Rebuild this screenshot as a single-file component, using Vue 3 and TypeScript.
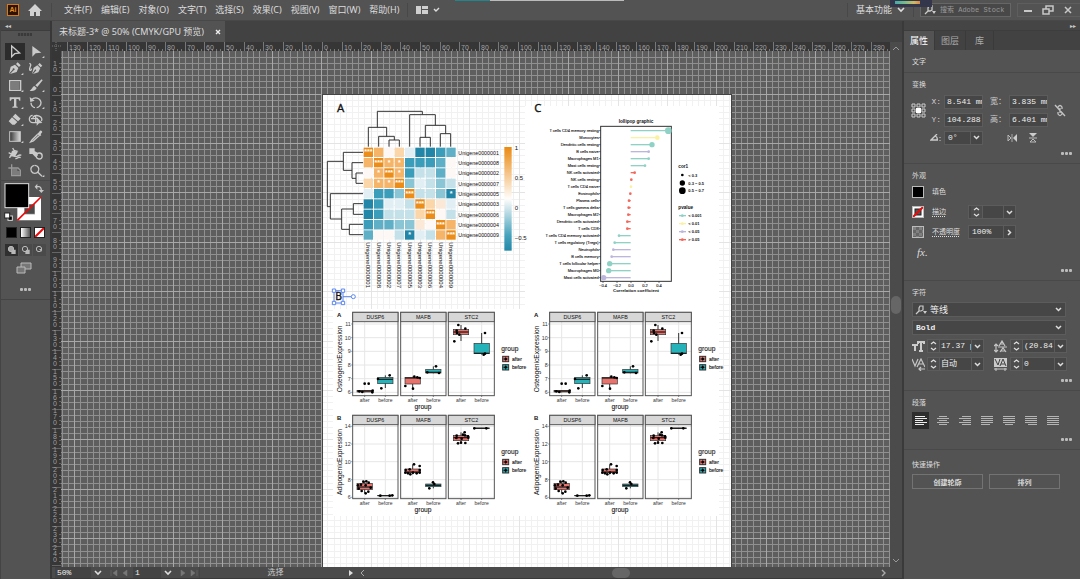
<script setup lang="ts">
interface Icon { name: string; fill?: string; line?: string; corner?: boolean }
interface Row { name: string; x: number; r: number; tone: string }
interface Box { at: number; q1: number; q3: number; med: number; lo: number; hi: number; tone: string; dots: number[][] }
interface Plot { tag: string; title: string; x: number; y: number; strip: number; ticks: { label: string; y: number }[]; panels: { gene: string; x: number; w: number; boxes: Box[] }[] }

const menus = ['文件(F)', '编辑(E)', '对象(O)', '文字(T)', '选择(S)', '效果(C)', '视图(V)', '窗口(W)', '帮助(H)']

const tools: Icon[] = [
  { name: '选择工具', line: 'M20 9V41L29 32L44 30Z' },
  { name: '直接选择工具', fill: 'M19 9V41L29 31L46 29Z', corner: true },
  { name: '钢笔工具', fill: 'M12 41L17 20L30 14L40 24L35 36L15 42L26 31A3 3 0 1 0 23 29ZM33 12L38 7L47 16L42 21Z', corner: true },
  { name: '曲率工具', fill: 'M18 42L23 23L34 16L43 25L37 37L21 42L31 31L28 28ZM36 14L41 9L49 17L44 22Z', line: 'M10 10C20 13 9 22 11 29C13 34 17 30 16 26' },
  { name: '矩形工具', line: 'M14 11H47V40H14Z', fill: 'M17 14H44V37H17Z', corner: true },
  { name: '画笔工具', fill: 'M47 7L50 10L34 30L28 25ZM25 27L32 33C29 41 20 43 11 41C18 38 19 29 25 27Z', corner: true },
  { name: '文字工具', fill: 'M14 10H46V20H43C42 16 41 15 34 15V36C34 38 36 38 38 38V41H22V38C24 38 27 38 27 36V15C20 15 19 16 18 20H14Z', corner: true },
  { name: '旋转工具', line: 'M17 17C25 8 43 11 45 26C45 34 38 41 32 41M15 26C15 34 21 41 27 41', fill: 'M11 9L13 24L26 20Z', corner: true },
  { name: '橡皮擦工具', fill: 'M31 8L47 23L39 31L23 17ZM21 19L37 33L29 41H22L11 31Z', corner: true },
  { name: '形状生成器工具', line: 'M20 13A9 10 0 0 0 20 35H33M20 20A12 9 0 1 1 46 30M15 23H36M29 14V35', fill: 'M32 18V44L39 37L49 36Z' },
  { name: '渐变工具', corner: true },
  { name: '吸管工具', fill: 'M37 15L42 8Q47 6 49 12L44 19L46 22L41 25L34 18L36 14Z', line: 'M35 19L18 36L14 42L22 39L39 23' },
  { name: '操控变形工具', line: 'M11 23L22 29L36 19L27 16L23 9M14 39C15 28 26 30 29 33C36 40 40 26 49 31M31 41C40 42 38 33 47 38', fill: 'M21 17L30 18L38 22L29 36L16 33Z' },
  { name: '混合工具', fill: 'M10 10H26V27H10ZM24 17L35 23V33L28 36L20 28Z', line: 'M40 24A9 9 0 1 1 39 42A9 9 0 0 1 40 24' },
  { name: '画板工具', line: 'M20 7V18M10 18H39L46 25V41H20V18', fill: 'M22 20H37V27H44V39H22Z' },
  { name: '缩放工具', line: 'M27 10A12 12 0 1 1 26 10M35 30L48 43', corner: true }
]

const shade = {
  o: '#eb8d18', p: '#f5b468', q: '#fad6a8', r: '#fbe8d6', w: '#fdf8f5',
  a: '#e1eff4', b: '#c4e0e9', c: '#8ac5d6', d: '#5fafc6', e: '#3b9dba', f: '#2186a8'
} as Record<string, string>
const matrix = ['opwqaffed', 'poppeeedw', 'wpopebbdw', 'qppocabcb', 'aeecobbcf', 'feaaboqra', 'febbbqowb', 'eddccrwop', 'dwwbfabpo']
const genes = ['Unigene0000001', 'Unigene0000008', 'Unigene0000002', 'Unigene0000007', 'Unigene0000005', 'Unigene0000003', 'Unigene0000006', 'Unigene0000004', 'Unigene0000009']
const cells = matrix.flatMap((line, j) => [...line].map((c, i) => ({
  x: 131 + i * 31, y: 161 + j * 31, tone: shade[c],
  mark: i === j ? '***' : (i + j === 12 && (i === 8 || j === 8)) || (i > 0 && j > 0 && i < 4 && j < 4) ? '*' : ''
})))

const green = '#8fd1c4'
const yellow = '#faf2a2'
const purple = '#bcb6dc'
const red = '#f3685c'
const lollipops: Row[] = [
  { name: 'T cells CD4 memory resting', x: 430, r: 10, tone: green },
  { name: 'Monocytes', x: 397, r: 7, tone: yellow },
  { name: 'Dendritic cells resting', x: 381, r: 8, tone: green },
  { name: 'B cells naive', x: 371, r: 4, tone: purple },
  { name: 'Macrophages M1', x: 371, r: 4, tone: green },
  { name: 'Mast cells resting', x: 360, r: 4, tone: green },
  { name: 'NK cells activated', x: 329, r: 4, tone: red },
  { name: 'NK cells resting', x: 319, r: 4, tone: red },
  { name: 'T cells CD4 naive', x: 318, r: 4, tone: yellow },
  { name: 'Eosinophils', x: 316, r: 4, tone: red },
  { name: 'Plasma cells', x: 312, r: 4, tone: red },
  { name: 'T cells gamma delta', x: 311, r: 4, tone: red },
  { name: 'Macrophages M2', x: 310, r: 4, tone: red },
  { name: 'Dendritic cells activated', x: 307, r: 4, tone: red },
  { name: 'T cells CD8', x: 307, r: 4, tone: red },
  { name: 'T cells CD4 memory activated', x: 282, r: 4, tone: green },
  { name: 'T cells regulatory (Tregs)', x: 269, r: 4, tone: green },
  { name: 'Neutrophils', x: 265, r: 4, tone: purple },
  { name: 'B cells memory', x: 260, r: 4, tone: purple },
  { name: 'T cells follicular helper', x: 254, r: 8, tone: green },
  { name: 'Macrophages M0', x: 251, r: 8, tone: green },
  { name: 'Mast cells activated', x: 236, r: 8, tone: purple }
]
const sizes = [{ t: '< 0.3', r: 4, y: 243 }, { t: '0.3 ~ 0.5', r: 8, y: 267 }, { t: '0.5 ~ 0.7', r: 10, y: 290 }]
const pvalues = [{ t: '< 0.001', c: green, y: 365 }, { t: '< 0.01', c: yellow, y: 389 }, { t: '< 0.05', c: purple, y: 413 }, { t: '> 0.05', c: red, y: 437 }]

const after = '#e8736c'
const before = '#25b3b9'
const upper = {
  tag: 'A', title: 'OsteogenicExpression', strip: 22,
  ticks: [11, 10, 9, 8, 7, 6].map((v, i) => ({ label: String(v), y: 57 + i * 41 })),
  panels: [
    { gene: 'DUSP6', x: 83, w: 136, boxes: [
      { at: 119, q1: 261, q3: 256, med: 258, lo: 262, hi: 256, tone: after, dots: [[119, 236], [131, 236], [103, 259], [112, 261], [143, 257], [142, 262]] },
      { at: 181, q1: 236, q3: 217, med: 223, lo: 249, hi: 211, tone: before, dots: [[159, 222], [194, 211], [169, 250]] }] },
    { gene: 'MAFB', x: 227, w: 136, boxes: [
      { at: 263, q1: 237, q3: 217, med: 219, lo: 250, hi: 215, tone: after, dots: [[241, 243], [264, 251], [268, 215], [277, 217], [284, 219]] },
      { at: 325, q1: 204, q3: 193, med: 202, lo: 205, hi: 184, tone: before, dots: [[307, 202], [333, 184], [342, 204]] }] },
    { gene: 'STC2', x: 370, w: 138, boxes: [
      { at: 408, q1: 89, q3: 73, med: 81, lo: 108, hi: 60, tone: after, dots: [[400, 60], [421, 71], [395, 77], [396, 84], [403, 89], [388, 109]] },
      { at: 470, q1: 146, q3: 115, med: 145, lo: 149, hi: 84, tone: before, dots: [[480, 84], [480, 146], [476, 149]] }] }
  ]
}
const lower = {
  tag: 'B', title: 'AdipogenicExpression', strip: 16,
  ticks: [14, 12, 10, 8, 6].map((v, i) => ({ label: String(v), y: 49 + i * 53 + (i > 2 ? 1 : 0) })),
  panels: [
    { gene: 'DUSP6', x: 83, w: 136, boxes: [
      { at: 119, q1: 239, q3: 220, med: 231, lo: 249, hi: 213, tone: after, dots: [[115, 215], [124, 214], [131, 218], [99, 226], [108, 224], [122, 226], [101, 236], [137, 233], [110, 243], [130, 245], [122, 250]] },
      { at: 181, q1: 257, q3: 256, med: 257, lo: 257, hi: 256, tone: before, dots: [[166, 257], [194, 257], [202, 256]] }] },
    { gene: 'MAFB', x: 227, w: 136, boxes: [
      { at: 263, q1: 188, q3: 177, med: 186, lo: 193, hi: 164, tone: after, dots: [[267, 163], [284, 168], [242, 180], [241, 188], [249, 190], [256, 193], [284, 180], [284, 188], [264, 188], [275, 190], [254, 178]] },
      { at: 325, q1: 230, q3: 222, med: 226, lo: 235, hi: 217, tone: before, dots: [[324, 217], [328, 222], [313, 235]] }] },
    { gene: 'STC2', x: 370, w: 138, boxes: [
      { at: 408, q1: 92, q3: 76, med: 83, lo: 100, hi: 67, tone: after, dots: [[419, 67], [414, 74], [420, 76], [395, 77], [429, 79], [394, 84], [430, 83], [410, 86], [421, 99], [408, 98], [399, 100]] },
      { at: 470, q1: 55, q3: 54, med: 55, lo: 55, hi: 54, tone: before, dots: [[448, 55], [484, 55]] }] }
  ]
}
const plots: Plot[] = [325, 522].flatMap(x => [{ ...upper, x, y: 305 }, { ...lower, x, y: 410 }])

const marks = (start: number, step: number, from: number, to: number) => {
  const list: number[] = []
  for (let i = Math.ceil((from - start) / step); start + i * step < to; i++) list.push(Math.round(start + i * step))
  return list
}
const minor = 49.4 / 8
const gridPath = (step: number, x0: number, x1: number, y0: number, y1: number) =>
  marks(420, step, x0, x1).map(x => `M${x + 0.5} ${y0}V${y1}`).join('') +
  marks(143, step, y0, y1).map(y => `M${x0} ${y + 0.5}H${x1}`).join('')
const outside = gridPath(minor, 61, 2600, 51, 1600)
const outsideMajor = gridPath(49.4, 61, 2600, 51, 1600)
const inside = gridPath(minor, 323, 731, 95, 700)
const insideMajor = gridPath(49.4, 323, 731, 95, 700)

const unit = 19.6
const columns = Math.floor((window.innerWidth - 205 - 322) / unit)
const rows = Math.floor((window.innerHeight - 12 - 95) / unit)
const across = Array.from({ length: columns + 14 }, (_, i) => i - 13).map(n => ({ text: String(Math.abs(n) * 10), x: Math.round(322 + n * unit) }))
const down = Array.from({ length: rows + 2 }, (_, i) => i - 1).map(n => ({ digits: [...String(Math.abs(n) * 10)], y: Math.round(95 + n * unit) }))

const alignRows = [
  [[0, 10], [0, 12], [0, 8], [0, 12], [0, 9]],
  [[2, 8], [0, 12], [2, 8], [0, 12], [2, 8]],
  [[3, 9], [0, 12], [4, 8], [0, 12], [3, 9]],
  [[0, 12], [0, 12], [0, 12], [0, 12], [0, 9]],
  [[0, 12], [0, 12], [0, 12], [0, 12], [2, 8]],
  [[0, 12], [0, 12], [0, 12], [0, 12], [3, 9]],
  [[0, 12], [0, 12], [0, 12], [0, 12], [0, 12]]
]
const alignNames = ['左对齐', '居中对齐', '右对齐', '两端对齐，末行左对齐', '两端对齐，末行居中对齐', '两端对齐，末行右对齐', '全部两端对齐']
</script>

<template>
  <div class="app">
    <header class="menubar">
      <span class="logo">Ai</span>
      <button class="plain home" aria-label="主页">
        <svg width="14" height="12" viewBox="0 0 14 12"><path d="M7 0L14 7H12V12H8V8H6V12H2V7H0Z" fill="#d2d2d2" /></svg>
      </button>
      <nav class="menus">
        <button v-for="m in menus" :key="m" class="plain">{{ m }}</button>
      </nav>
      <button class="plain arrange" aria-label="排列文档">
        <svg width="24" height="10" viewBox="0 0 24 10">
          <path d="M0 1H5V9H0ZM6 1H12V4H6ZM6 5H12V9H6Z" fill="#cfcfcf" /><path d="M18 4L20 6L23 3" fill="none" stroke="#ddd" stroke-width="1.4" />
        </svg>
      </button>
      <div class="space"></div>
      <button class="plain workspace">基本功能
        <svg width="8" height="6" viewBox="0 0 8 6"><path d="M1 1L4 4L7 1" fill="none" stroke="#ddd" stroke-width="1.6" /></svg>
      </button>
      <label class="search">
        <svg width="12" height="10" viewBox="0 0 12 10"><path d="M4 6L1 9M5 1H8V5L6 6H4V3Z" fill="none" stroke="#ccc" stroke-width="1.3" /><path d="M8 6H12L10 9Z" fill="#ccc" /></svg>
        <input type="text" placeholder="搜索 Adobe Stock" aria-label="搜索 Adobe Stock" />
      </label>
      <div class="window">
        <button class="plain" aria-label="最小化"><svg width="12" height="12" viewBox="0 0 12 12"><path d="M2 7H10" stroke="#c8c8c8" stroke-width="2" /></svg></button>
        <button class="plain" aria-label="还原"><svg width="12" height="12" viewBox="0 0 12 12"><path d="M1 5H7V10H1ZM4 5V2H11V7H7" fill="none" stroke="#c8c8c8" stroke-width="1.5" /></svg></button>
        <button class="plain" aria-label="关闭"><svg width="12" height="12" viewBox="0 0 12 12"><path d="M3 3L9 9M9 3L3 9" stroke="#c8c8c8" stroke-width="1.5" /></svg></button>
      </div>
      <div class="edge"></div>
      <div class="meter"></div>
    </header>

    <div class="body">
      <aside class="tools">
        <button class="plain collapse" aria-label="折叠">◂◂</button>
        <div class="grip"></div>
        <div class="toolgrid">
          <button v-for="(t, i) in tools" :key="t.name" class="tool" :class="{ on: i === 0 }" :aria-label="t.name">
            <svg width="20" height="17" viewBox="0 0 60 51">
              <defs><linearGradient id="ramp"><stop offset="0" stop-color="#333" /><stop offset="1" stop-color="#ddd" /></linearGradient></defs>
              <rect v-if="i === 10" x="14" y="11" width="32" height="29" fill="url(#ramp)" stroke="#c4c4c4" stroke-width="3" />
              <path v-if="t.fill" :d="t.fill" :fill="i === 4 || i === 14 ? '#7c7c7c' : '#cacaca'" />
              <path v-if="t.line" :d="t.line" fill="none" :stroke="i === 14 ? '#999' : '#cacaca'" stroke-width="4" />
              <path v-if="t.corner" d="M55 38V45H48Z" fill="#ccc" />
            </svg>
          </button>
        </div>
        <div class="paint">
          <svg width="50" height="42" viewBox="0 0 150 126">
            <path d="M52 48H123V118H52ZM74 70V96H104V70Z" fill="#fff" fill-rule="evenodd" />
            <rect x="74" y="70" width="30" height="29" fill="#4b4b4b" stroke="#888" stroke-width="2" />
            <path d="M52 118L123 48" stroke="#f00808" stroke-width="5" />
            <rect x="15" y="8" width="71" height="72" fill="#000" stroke="#ddd" stroke-width="3" />
            <path d="M111 17H117Q124 18 124 30" fill="none" stroke="#c6c6c6" stroke-width="4" /><path d="M112 8V26L104 17ZM116 27H132L124 36Z" fill="#c6c6c6" />
            <rect x="24" y="105" width="13" height="13" fill="#000" stroke="#ddd" stroke-width="3" /><rect x="14" y="96" width="15" height="15" fill="#fff" stroke="#222" stroke-width="3" />
          </svg>
        </div>
        <div class="modes">
          <button class="chip solid" aria-label="颜色"></button>
          <button class="chip fade" aria-label="渐变"></button>
          <button class="chip none" aria-label="无"><svg width="9" height="9" viewBox="0 0 9 9"><path d="M0 9L9 0" stroke="#f00808" stroke-width="2" /></svg></button>
        </div>
        <div class="modes draw">
          <button v-for="n in 3" :key="n" class="drawmode" :class="{ on: n === 1 }" :aria-label="['正常绘图', '背面绘图', '内部绘图'][n - 1]">
            <svg width="10" height="10" viewBox="0 0 30 30"><circle cx="12" cy="12" r="8" :fill="n === 1 ? '#aaa' : 'none'" stroke="#b8b8b8" stroke-width="3" /><path :d="n === 3 ? 'M12 12H20V20Z' : 'M17 14H26V27H13V19Z'" fill="#b8b8b8" /></svg>
          </button>
        </div>
        <button class="plain screen" aria-label="更改屏幕模式">
          <svg width="16" height="12" viewBox="0 0 16 12"><path d="M5 1H15V7H5Z" fill="#777" stroke="#bbb" /><path d="M1 5H9V11H1Z" fill="#777" stroke="#bbb" /></svg>
        </button>
        <button class="plain dots" aria-label="编辑工具栏"><i></i><i></i><i></i></button>
        <div class="toolend"></div>
      </aside>

      <main class="document">
        <div class="tabs">
          <div class="tab">未标题-3* @ 50% (CMYK/GPU 预览)<button class="plain" aria-label="关闭文档"><svg width="6" height="6" viewBox="0 0 6 6"><path d="M1 1L5 5M5 1L1 5" stroke="#eee" stroke-width="1.4" /></svg></button></div>
        </div>
        <div class="view">
          <svg class="sheet">
            <defs>
              <linearGradient id="bar" x1="0" y1="0" x2="0" y2="1">
                <stop offset="0" stop-color="#ea8a12" /><stop offset=".5" stop-color="#fffdfb" /><stop offset=".85" stop-color="#48a3bd" /><stop offset="1" stop-color="#2388a8" />
              </linearGradient>
            </defs>
            <g transform="translate(-52 -42)">
              <rect x="61" y="51" width="100%" height="100%" fill="#5e5e5e" />
              <path :d="outside" stroke="#909090" fill="none" />
              <path :d="outsideMajor" stroke="#a8a8a8" fill="none" />
              <rect x="322" y="94" width="410" height="100%" fill="#444" />
              <rect x="323" y="95" width="408" height="100%" fill="#fff" />
              <path :d="inside" stroke="#f1f1f1" fill="none" />
              <path :d="insideMajor" stroke="#e4e4e4" fill="none" />
              <rect x="525" y="106" width="194" height="203" fill="#fff" />
              <rect x="333" y="309" width="386" height="207" fill="#fff" />

              <svg x="320" y="94" width="210" height="215" viewBox="0 0 630 645" class="chart">
                <text x="51" y="54" font-size="34" class="letter">A</text>
                <path class="tree" d="M172 100V52H307V62M145 158V100H200V127M176 158V127H223V138M207 158V138H238V158M269 158V62H346V94M316 130V94H377V119M300 158V130H331V158M361 158V119H392V158" />
                <path class="tree" d="M70 202H22V338H31M129 175H70V229H96M129 206H96V253H108M129 237H108V268H129M129 299H31V375H65M100 345H65V406H88M129 329H100V361H129M129 391H88V422H129" />
                <g v-for="(c, i) in cells" :key="i">
                  <rect :x="c.x" :y="c.y" width="28" height="28" :fill="c.tone" />
                  <text v-if="c.mark" :x="c.x + 14" :y="c.y + 20" font-size="21" font-weight="700" text-anchor="middle" class="star">{{ c.mark }}</text>
                </g>
                <text v-for="(g, i) in genes" :key="g" x="415" :y="182 + i * 31" font-size="16">{{ g }}</text>
                <text v-for="(g, i) in genes" :key="g + i" :transform="`translate(${139 + i * 31} 445) rotate(90)`" font-size="18">{{ g }}</text>
                <rect x="553" y="159" width="22" height="311" fill="url(#bar)" />
                <text x="584" y="167" font-size="18">1</text><text x="584" y="258" font-size="18">0.5</text>
                <text x="584" y="348" font-size="18">0</text><text x="584" y="439" font-size="18">−0.5</text>
                <text x="46" y="619" font-size="31" class="letter">B</text>
                <g fill="#fff" stroke="#5a86f0" stroke-width="3">
                  <path d="M42 590H69V627H42ZM69 608H94" fill="none" />
                  <path d="M37 585H47V595H37ZM64 585H74V595H64ZM37 622H47V632H37ZM64 622H74V632H64Z" /><circle cx="100" cy="608" r="6" />
                </g>
              </svg>

              <svg x="525" y="94" width="210" height="215" viewBox="0 0 630 645" class="chart">
                <text x="28" y="54" font-size="34" class="letter">C</text>
                <text x="333" y="87" font-size="14" font-weight="700" text-anchor="middle">lollipop graphic</text>
                <rect x="227" y="97" width="212" height="465" fill="none" stroke="#333" stroke-width="3" />
                <g v-for="(r, i) in lollipops" :key="r.name">
                  <path :d="`M317 ${110 + i * 21}H${r.x}`" :stroke="r.tone" stroke-width="4" />
                  <circle :cx="r.x" :cy="110 + i * 21" :r="r.r" :fill="r.tone" />
                  <path :d="`M222 ${110 + i * 21}H227`" stroke="#333" stroke-width="2" />
                  <text x="221" :y="115 + i * 21" font-size="12" text-anchor="end" class="firm">{{ r.name }}</text>
                </g>
                <g v-for="(t, i) in ['−0.4', '−0.2', '0.0', '0.2', '0.4']" :key="t">
                  <path :d="`M${234 + i * 42} 562V567`" stroke="#333" stroke-width="2" />
                  <text :x="234 + i * 42" y="578" font-size="12" text-anchor="middle" class="firm">{{ t }}</text>
                </g>
                <text x="333" y="595" font-size="13" font-weight="700" text-anchor="middle">Correlation coefficient</text>
                <text x="460" y="221" font-size="14" font-weight="700">cor1</text>
                <text x="460" y="345" font-size="14" font-weight="700">pvalue</text>
                <g v-for="s in sizes" :key="s.t"><circle cx="472" :cy="s.y" :r="s.r" /><text x="490" :y="s.y + 5" font-size="12" font-weight="700">{{ s.t }}</text></g>
                <g v-for="p in pvalues" :key="p.t"><path :d="`M462 ${p.y}H483`" :stroke="p.c" stroke-width="4" /><circle cx="472" :cy="p.y" r="4" :fill="p.c" /><text x="490" :y="p.y + 5" font-size="12" font-weight="700">{{ p.t }}</text></g>
              </svg>

              <svg v-for="(p, k) in plots" :key="k" :x="p.x" :y="p.y" width="205" height="110" viewBox="0 0 615 330" class="chart">
                <text x="36" :y="p.strip + 14" font-size="18" font-weight="700">{{ p.tag }}</text>
                <text :transform="`translate(51 ${p.strip + 140}) rotate(-90)`" font-size="20" text-anchor="middle">{{ p.title }}</text>
                <g v-for="t in p.ticks" :key="t.label">
                  <text x="77" :y="t.y + 6" font-size="16" text-anchor="end" class="soft">{{ t.label }}</text><path :d="`M79 ${t.y}H83`" stroke="#444" stroke-width="2" />
                </g>
                <g v-for="q in p.panels" :key="q.gene">
                  <path v-for="t in p.ticks" :key="t.y" :d="`M${q.x} ${t.y}H${q.x + q.w}`" stroke="#e6e6e6" stroke-width="3" />
                  <path v-for="b in q.boxes" :key="b.at" :d="`M${b.at} ${p.strip + 28}V${p.strip + 250}`" stroke="#e6e6e6" stroke-width="3" />
                  <rect :x="q.x" :y="p.strip" :width="q.w" height="250" fill="none" stroke="#555" stroke-width="3" />
                  <rect :x="q.x" :y="p.strip" :width="q.w" height="28" fill="#d7d7d7" stroke="#555" stroke-width="3" />
                  <text :x="q.x + q.w / 2" :y="p.strip + 20" font-size="16" text-anchor="middle">{{ q.gene }}</text>
                  <g v-for="(b, n) in q.boxes" :key="n">
                    <path :d="`M${b.at} ${b.hi}V${b.lo}`" stroke="#333" stroke-width="3" />
                    <rect :x="b.at - 23" :y="b.q3" width="46" :height="b.q1 - b.q3" :fill="b.tone" stroke="#333" stroke-width="2" />
                    <path :d="`M${b.at - 23} ${b.med}H${b.at + 23}`" stroke="#222" stroke-width="4" />
                    <circle v-for="(d, m) in b.dots" :key="m" :cx="d[0]" :cy="d[1]" r="4" fill="#000" />
                    <path :d="`M${b.at} ${p.strip + 250}V${p.strip + 254}`" stroke="#444" stroke-width="2" />
                    <text :x="b.at" :y="p.strip + 269" font-size="15" text-anchor="middle" class="soft">{{ n ? 'before' : 'after' }}</text>
                  </g>
                </g>
                <text x="294" :y="p.strip + 290" font-size="20" text-anchor="middle" class="firm">group</text>
                <text x="529" :y="p.strip + 117" font-size="20" class="firm">group</text>
                <g v-for="(l, n) in ['after', 'before']" :key="l">
                  <rect x="533" :y="p.strip + 132 + n * 25" width="18" height="16" :fill="n ? before : after" stroke="#333" stroke-width="3" />
                  <path :d="`M533 ${p.strip + 140 + n * 25}H551M542 ${p.strip + 132 + n * 25}v16`" stroke="#222" stroke-width="2" /><circle cx="542" :cy="p.strip + 140 + n * 25" r="4" />
                  <text x="561" :y="p.strip + 146 + n * 25" font-size="15" class="firm">{{ l }}</text>
                </g>
              </svg>

              <rect x="52" y="42" width="100%" height="9" fill="#363636" />
              <rect x="52" y="42" width="9" height="100%" fill="#363636" />
              <path d="M52 46H61M56 42V51" stroke="#777" stroke-dasharray="1 1" />
              <g class="ruler">
                <g v-for="t in across" :key="t.x">
                  <path :d="`M${t.x + 0.5} 42V51M${t.x + 4.5} 49v2M${t.x + 8.5} 49v2M${t.x + 12.5} 49v2M${t.x + 16.5} 49v2`" stroke="#777" />
                  <text :x="t.x + 2" y="50">{{ t.text }}</text>
                </g>
                <g v-for="t in down" :key="t.y">
                  <path :d="`M52 ${t.y + 0.5}H61M59 ${t.y - 3.5}h2M59 ${t.y - 7.5}h2M59 ${t.y - 11.5}h2`" stroke="#666" />
                  <text v-for="(d, i) in t.digits" :key="i" x="53" :y="t.y - 3 - (t.digits.length - 1 - i) * 6">{{ d }}</text>
                </g>
              </g>
            </g>
          </svg>
          <div class="vscroll">
            <svg width="6" height="4" viewBox="0 0 6 4"><path d="M0 4L3 1L6 4" fill="none" stroke="#999" /></svg>
            <i></i>
            <svg width="6" height="4" viewBox="0 0 6 4"><path d="M0 0L3 3L6 0" fill="none" stroke="#999" /></svg>
          </div>
        </div>
        <footer class="status">
          <input class="zoomin" type="text" value="50%" aria-label="缩放" />
          <button class="plain drop" aria-label="缩放级别"><svg width="8" height="6" viewBox="0 0 8 6"><path d="M1 1L4 4L7 1" fill="none" stroke="#ddd" stroke-width="1.6" /></svg></button>
          <span class="nav"><svg width="18" height="8" viewBox="0 0 18 8"><path d="M1 1V7M7 1L3 4L7 7ZM17 1L13 4L17 7Z" fill="#777" stroke="#777" stroke-width=".5" /></svg></span>
          <input class="page" type="text" value="1" aria-label="画板" />
          <button class="plain drop" aria-label="选择画板"><svg width="8" height="6" viewBox="0 0 8 6"><path d="M1 1L4 4L7 1" fill="none" stroke="#ddd" stroke-width="1.6" /></svg></button>
          <span class="nav"><svg width="18" height="8" viewBox="0 0 18 8"><path d="M1 1L5 4L1 7ZM11 1L15 4L11 7ZM17 1V7" fill="#777" stroke="#777" stroke-width=".5" /></svg></span>
          <span class="state">选择</span>
          <svg width="20" height="8" viewBox="0 0 20 8"><path d="M2 1L6 4L2 7Z" fill="#ddd" /><path d="M17 1L14 4L17 7" fill="none" stroke="#aaa" /></svg>
          <div class="hscroll"><i></i></div>
          <svg class="next" width="6" height="8" viewBox="0 0 6 8"><path d="M1 1L4 4L1 7" fill="none" stroke="#aaa" stroke-width="1.4" /></svg>
        </footer>
      </main>

      <aside class="props">
        <button class="plain collapse right" aria-label="折叠面板">▸▸</button>
        <div class="ptabs"><button class="on">属性</button><button>图层</button><button>库</button></div>
        <section class="kind"><h2>文字</h2></section>
        <section class="transform">
          <h2>变换</h2>
          <div class="geo">
            <svg class="ref" width="15" height="15" viewBox="0 0 15 15"><path d="M1 1H4V4H1ZM6 1H9V4H6ZM11 1H14V4H11ZM1 6H4V9H1ZM11 6H14V9H11ZM1 11H4V14H1ZM6 11H9V14H6ZM11 11H14V14H11Z" fill="none" stroke="#ccc" /><path d="M5 5H10V10H5Z" fill="#fff" /></svg>
            <label for="gx">X:</label><input id="gx" type="text" value="8.541 mm" />
            <label for="gw">宽：</label><input id="gw" type="text" value="3.835 mm" />
            <button class="plain link" aria-label="约束宽度和高度比例"><svg width="12" height="13" viewBox="0 0 12 13"><path d="M4 5V3Q6 0 8 3V5M4 8V10Q6 13 8 10V8M6 4V9M1 1L11 12" fill="none" stroke="#c4c4c4" stroke-width="1.3" /></svg></button>
            <label for="gy">Y:</label><input id="gy" type="text" value="104.288" />
            <label for="gh">高：</label><input id="gh" type="text" value="6.401 mm" />
            <label for="ga" aria-label="旋转" class="angle"><svg width="11" height="8" viewBox="0 0 11 8"><path d="M7 0L1 6H8M5 2Q8 3 7 6" fill="none" stroke="#ccc" stroke-width="1.3" /><path d="M10 3V4M10 6V7" stroke="#ccc" /></svg></label>
            <div class="combo"><input id="ga" type="text" value="0°" /><button aria-label="旋转角度"><svg width="7" height="5" viewBox="0 0 7 5"><path d="M1 1L3.500 3.500L6 1" fill="none" stroke="#ddd" stroke-width="1.5" /></svg></button></div>
            <div class="flips">
              <button class="plain" aria-label="水平翻转"><svg width="10" height="8" viewBox="0 0 10 8"><path d="M1 1L4 4L1 7Z" fill="none" stroke="#bbb" /><path d="M10 0V8L6 4Z" fill="#ccc" /><path d="M5 0V8" stroke="#aaa" /></svg></button>
              <button class="plain" aria-label="垂直翻转"><svg width="8" height="10" viewBox="0 0 8 10"><path d="M0 0H8L4 4Z" fill="#ccc" /><path d="M1 9H7L4 6ZM0 5H8" fill="none" stroke="#bbb" /></svg></button>
            </div>
          </div>
          <button class="plain dots" aria-label="更多选项"><i></i><i></i><i></i></button>
        </section>
        <section class="look">
          <h2>外观</h2>
          <div class="line"><button class="swatch black" aria-label="填色"></button><span>填色</span></div>
          <div class="line"><button class="swatch stroke" aria-label="描边颜色"><svg width="12" height="12" viewBox="0 0 12 12"><rect x="3" y="3" width="6" height="6" fill="#555" stroke="#222" /><path d="M0 12L12 0" stroke="#f00808" stroke-width="2" /></svg></button><a href="#">描边</a>
            <div class="combo wide"><button class="step" aria-label="描边粗细"><svg width="7" height="10" viewBox="0 0 7 10"><path d="M1 3L3.500 1L6 3M1 7L3.500 9L6 7" fill="none" stroke="#ddd" stroke-width="1.3" /></svg></button><input type="text" aria-label="描边粗细数值" /><button aria-label="描边粗细选项"><svg width="7" height="5" viewBox="0 0 7 5"><path d="M1 1L3.500 3.500L6 1" fill="none" stroke="#ddd" stroke-width="1.5" /></svg></button></div></div>
          <div class="line"><button class="swatch check" aria-label="不透明度蒙版"></button><a href="#">不透明度</a>
            <div class="combo wide"><input type="text" value="100%" aria-label="不透明度" /><button aria-label="不透明度滑块"><svg width="5" height="7" viewBox="0 0 5 7"><path d="M1 1L3.500 3.500L1 6" fill="none" stroke="#ddd" stroke-width="1.5" /></svg></button></div></div>
          <button class="plain fx">fx.</button>
          <button class="plain dots" aria-label="更多选项"><i></i><i></i><i></i></button>
        </section>
        <section class="type">
          <h2>字符</h2>
          <div class="pick"><svg width="12" height="10" viewBox="0 0 12 10"><path d="M4 6L1 9M5 1H8V5L6 6H4V3Z" fill="none" stroke="#ccc" stroke-width="1.2" /><path d="M8 6H12L10 9Z" fill="#ccc" /></svg><select aria-label="字体" class="face"><option>等线</option></select><svg class="arrow" width="7" height="5" viewBox="0 0 7 5"><path d="M1 1L3.500 3.500L6 1" fill="none" stroke="#ddd" stroke-width="1.5" /></svg></div>
          <div class="pick"><select aria-label="字体样式"><option>Bold</option></select><svg class="arrow" width="7" height="5" viewBox="0 0 7 5"><path d="M1 1L3.500 3.500L6 1" fill="none" stroke="#ddd" stroke-width="1.5" /></svg></div>
          <div class="metrics">
            <template v-for="(m, i) in [['字体大小', '17.37 pt'], ['行距', '(20.84'], ['字偶间距', '自动'], ['字符间距', '0']]" :key="m[0]">
              <label :for="'m' + i" :aria-label="m[0]">
                <svg width="13" height="13" viewBox="0 0 13 13">
                  <path v-if="i === 0" d="M0 4H6V6H4V11H2V6H0ZM5 1H13V4H11V3H10V10H11V12H7V10H8V3H7V4H5Z" fill="#ccc" />
                  <path v-else-if="i === 1" d="M2 4V12M0 6L2 4L4 6M0 10L2 12L4 10M5 6L8 1L11 6M6 4H10M4 7H13M6 12L9 8L12 12M7 11H11" fill="none" stroke="#c6c6c6" stroke-width="1.2" />
                  <path v-else-if="i === 2" d="M0 1L3 8L6 1M5 9L9 1L13 9M7 6H11M7 11H13M9 9L7 11L9 13" fill="none" stroke="#c6c6c6" stroke-width="1.2" />
                  <g v-else><path d="M0 0H13V9H0Z" fill="#ccc" /><path d="M1 1L4 7L6 1M6 8L9 1L12 8M7 6H11" fill="none" stroke="#444" /><path d="M0 11H13M2 10V13M11 10V13" stroke="#ccc" /></g>
                </svg>
              </label>
              <div class="combo trio"><button class="step" aria-label="微调"><svg width="7" height="10" viewBox="0 0 7 10"><path d="M1 3L3.500 1L6 3M1 7L3.500 9L6 7" fill="none" stroke="#ddd" stroke-width="1.3" /></svg></button><input :id="'m' + i" type="text" :value="m[1]" /><button aria-label="选项"><svg width="7" height="5" viewBox="0 0 7 5"><path d="M1 1L3.500 3.500L6 1" fill="none" stroke="#ddd" stroke-width="1.5" /></svg></button></div>
            </template>
          </div>
          <button class="plain dots" aria-label="更多选项"><i></i><i></i><i></i></button>
        </section>
        <section class="para">
          <h2>段落</h2>
          <div class="aligns">
            <button v-for="(a, i) in alignRows" :key="i" :class="{ on: i === 0 }" :aria-label="alignNames[i]">
              <svg width="12" height="10" viewBox="0 0 12 10"><path :d="a.map((s, j) => `M${s[0]} ${j * 2 + 0.5}h${s[1]}`).join('')" :stroke="i ? '#b5b5b5' : '#eee'" /></svg>
            </button>
          </div>
          <button class="plain dots" aria-label="更多选项"><i></i><i></i><i></i></button>
        </section>
        <section class="quick">
          <h2>快速操作</h2>
          <div class="actions"><button>创建轮廓</button><button>排列</button></div>
        </section>
      </aside>
    </div>
  </div>
</template>

<style>
html, body { margin: 0; background: #535353; }
</style>

<style scoped>
* { box-sizing: border-box; }
.app { display: flex; flex-direction: column; height: 100vh; overflow: hidden; background: #535353; color: #dcdcdc; font: 9px/12px "Noto Sans", "Noto Sans CJK SC", sans-serif; }
button, input, select { font: inherit; color: inherit; border: 0; padding: 0; margin: 0; background: none; border-radius: 0; min-width: 0; }
svg { display: block; flex: none; }
.plain { display: flex; align-items: center; white-space: nowrap; }
.menubar { position: relative; display: flex; align-items: center; height: 21px; flex: none; border-bottom: 1px solid #484848; padding-left: 7px; }
.logo { width: 12px; height: 12px; border: 1px solid #d97a18; background: #2a1400; color: #f08c1c; font: 700 7px/10px "Liberation Sans", sans-serif; text-align: center; }
.home { margin: 0 9px 0 9px; }
.menus { display: flex; gap: 9px; border-left: 1px solid #484848; padding: 0 8px 0 12px; border-right: 1px solid #484848; height: 14px; align-items: center; }
.arrange { margin-left: 8px; }
.space { flex: 1; }
.workspace { gap: 5px; padding: 0 8px; height: 14px; border-left: 1px solid #484848; border-right: 1px solid #484848; margin-right: 6px; }
.search { display: flex; align-items: center; gap: 4px; width: 91px; height: 14px; padding-left: 3px; border: 1px solid #666; background: #484848; }
.search input { width: 70px; font: 7px/12px "Liberation Mono", "Noto Sans CJK SC", monospace; }
.search input::placeholder { color: #989898; opacity: 1; }
.window { display: flex; gap: 8px; margin-left: 6px; padding: 0 6px 0 4px; border: 1px solid #5e5e5e; border-right: 0; height: 14px; align-items: center; }
.edge { position: absolute; left: 455px; top: 0; width: 169px; height: 1px; background: linear-gradient(90deg, #20858c 21%, #bbb 21%); }
.meter { position: absolute; right: 148px; top: 0; width: 42px; height: 7px; background: #34374c; }
.meter::after { content: ""; position: absolute; left: 5px; top: 1px; width: 25px; height: 3px; background: linear-gradient(90deg, #4aa, #7b8 40%, #cb6 75%, #d84); }
.body { display: flex; flex: 1; min-height: 0; }
.tools { width: 52px; flex: none; border-left: 1px solid #444; border-right: 2px solid #383838; display: flex; flex-direction: column; }
.collapse { height: 10px; background: #454545; font-size: 6px; line-height: 10px; padding-left: 4px; color: #ccc; flex: none; border-bottom: 1px solid #3d3d3d; }
.grip { height: 3px; width: 14px; margin: 2px 0 7px 17px; background: repeating-linear-gradient(90deg, #3a3a3a 0 2px, #4b4b4b 2px 3px); flex: none; }
.toolgrid { display: grid; grid-template-columns: 20px 20px; column-gap: 1px; padding-left: 4px; grid-auto-rows: 17px; }
.tool { display: block; }
.tool.on { background: #2c2c2c; }
.paint { margin-top: 1px; border-top: 1px solid #494949; height: 45px; margin-left: -1px; }
.modes { display: flex; gap: 3px; padding-left: 5px; height: 15px; align-items: center; }
.chip { width: 11px; height: 11px; border: 1px solid #222; }
.solid { background: #000; } .fade { background: linear-gradient(90deg, #fff, #555); } .none { background: #fff; }
.draw { gap: 1px; padding-left: 4px; margin-top: 2px; }
.drawmode { display: flex; align-items: center; justify-content: center; width: 13px; height: 12px; background: #4a4a4a; }
.drawmode.on { background: #303030; }
.screen { margin: 5px 0 0 15px; }
.dots { display: flex; gap: 1px; }
.dots i { width: 3px; height: 3px; border-radius: 1px; background: #bbb; }
.tools .dots { margin: 14px 0 8px 19px; }
.toolend { border-top: 1px solid #444; flex: 1; }
.document { flex: 1; min-width: 0; display: flex; flex-direction: column; }
.tabs { height: 21px; background: #424242; flex: none; }
.tab { display: flex; align-items: center; justify-content: space-between; width: 173px; height: 21px; padding: 0 4px 0 7px; background: #535353; white-space: nowrap; }
.view { flex: 1; min-height: 0; display: flex; }
.sheet { flex: 1; min-width: 0; width: 0; height: 100%; overflow: hidden; }
.chart { font-family: "Liberation Sans", sans-serif; }
.chart text { fill: #111; }
.chart .letter { font-family: "Noto Sans", sans-serif; stroke: #111; stroke-width: 1; }
.chart .firm { stroke: #111; stroke-width: 0.3; }
.chart .soft { fill: #333; }
.chart .star { fill: #fff; }
.tree { fill: none; stroke: #333; stroke-width: 3; }
.ruler text { font: 7px "Liberation Sans", sans-serif; fill: #a0a0a0; }
.vscroll { width: 12px; background: #4b4b4b; display: flex; flex-direction: column; align-items: center; padding: 4px 0; }
.vscroll i { width: 10px; height: 18px; border-radius: 5px; background: #666; margin: auto 0; }
.status { display: flex; align-items: center; height: 12px; flex: none; background: #4b4b4b; border-bottom: 1px solid #3a3a3a; font: 8px/11px "Liberation Mono", "Noto Sans CJK SC", monospace; padding-left: 3px; }
.status input { background: #434343; height: 11px; padding-left: 2px; }
.zoomin { width: 36px; } .page { width: 28px; }
.drop { width: 14px; padding-left: 3px; }
.nav { width: 28px; padding-left: 5px; }
.state { width: 158px; text-align: center; border-left: 1px solid #444; color: #ccc; margin-left: -4px; padding-right: 12px; }
.status .state { margin-right: -10px; padding-right: 6px; }
.hscroll { flex: 1; display: flex; justify-content: center; padding-right: 7px; }
.hscroll i { width: 18px; height: 10px; border-radius: 5px; background: #666; }
.next { margin-right: 15px; }
.props { width: 178px; flex: none; border-left: 2px solid #3a3a3a; display: flex; flex-direction: column; }
.right { justify-content: flex-end; padding: 0 4px; }
.ptabs { display: flex; height: 19px; background: #424242; flex: none; color: #aaa; font-size: 9px; }
.ptabs button { padding: 0 6px; border-right: 1px solid #3a3a3a; line-height: 12px; }
.ptabs button:last-child { padding: 0 9px; }
.ptabs .on { background: #535353; color: #fff; }
section { position: relative; border-bottom: 1px solid #494949; padding: 5px 7px 0 8px; flex: none; }
h2 { margin: 0; font: 7px/12px "Noto Sans CJK SC", sans-serif; color: #ddd; }
section .dots { position: absolute; right: 8px; bottom: 8px; }
.kind { height: 23px; }
.transform { height: 91px; }
.geo { display: grid; grid-template-columns: 15px 18px 39px 26px 39px 18px; grid-auto-rows: 15px; row-gap: 3px; margin: 4px 0 0 -1px; align-items: center; }
.geo label { text-align: right; padding-right: 3px; font: 8px/14px "Liberation Mono", "Noto Sans CJK SC", monospace; color: #ccc; white-space: nowrap; overflow: hidden; }
.ref { grid-row: 1 / 3; }
.link { grid-row: 1 / 3; grid-column: 6; justify-self: end; }
.angle { grid-column: 2; display: flex; justify-content: flex-end; }
input, select { font: 8px/12px "Liberation Mono", "Noto Sans CJK SC", monospace; color: #eee; }
.geo > input, .combo, .pick { background: #464646; border: 1px solid #5c5c5c; height: 14px; padding-left: 2px; }
.geo > input { width: 39px; }
.combo { display: flex; align-items: center; }
.combo input { flex: 1; height: 12px; width: 0; padding-left: 1px; }
.combo button { width: 12px; height: 12px; border-left: 1px solid #5c5c5c; display: flex; align-items: center; justify-content: center; flex: none; }
.combo .step { border-left: 0; border-right: 1px solid #5c5c5c; background: #4d4d4d; }
.flips { grid-column: 4 / 6; display: flex; gap: 12px; padding-left: 24px; }
.look { height: 117px; }
.line { display: flex; align-items: center; height: 20px; font-size: 7px; color: #ddd; }
.look h2 + .line { margin-top: 1px; }
.line .combo { margin-left: auto; margin-right: 57px; }
.wide { width: 48px; }
.swatch { width: 12px; height: 12px; border: 1px solid #bbb; margin-right: 8px; flex: none; display: flex; align-items: center; justify-content: center; overflow: hidden; }
.black { background: #000; } .stroke { background: #fff; }
.check { background: repeating-conic-gradient(#666 0 25%, #808080 0 50%) 0 0 / 6px 6px; }
a { color: inherit; text-decoration: underline dotted; text-underline-offset: 2px; }
.fx { font: italic 11px/16px "Liberation Serif", serif; margin-left: 5px; height: 20px; }
.type { height: 110px; }
.pick { position: relative; display: flex; align-items: center; width: 154px; height: 15px; margin-top: 4px; }
.pick + .pick { margin-top: 3px; }
.pick select { appearance: none; flex: 1; height: 13px; padding-left: 1px; font-weight: 700; }
.pick .face { font: 9px/12px "Noto Sans CJK SC", sans-serif; padding-left: 3px; }
.arrow { margin: 0 3px; }
.metrics { display: grid; grid-template-columns: 15px 57px 26px 57px; row-gap: 4px; margin-top: 4px; align-items: center; }
.metrics label:nth-of-type(even) { padding-left: 10px; }
.trio { padding: 0; }
.para { height: 59px; }
.aligns { display: flex; gap: 5px; margin-top: 4px; }
.aligns button { width: 17px; height: 17px; display: flex; align-items: center; justify-content: center; }
.aligns .on { background: #2e2e2e; }
.quick { border-bottom: 0; padding-top: 8px; }
.actions { display: grid; grid-template-columns: 71px 71px; gap: 6px; margin-top: 4px; }
.actions button { height: 15px; border: 1px solid #737373; font: 500 7px/12px "Noto Sans CJK SC", sans-serif; color: #eee; }
</style>
